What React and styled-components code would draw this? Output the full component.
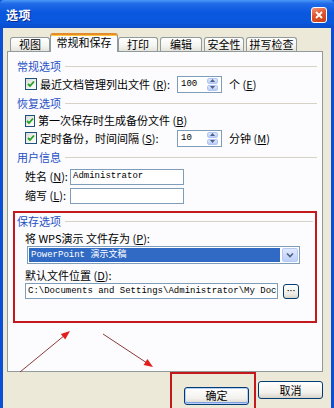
import React from "react";
import styled, { createGlobalStyle, css } from "styled-components";

const cjk = `"Noto Sans CJK SC", "Liberation Sans", sans-serif`;
const mono = `"Liberation Mono", "Noto Sans CJK SC", monospace`;

const GlobalStyle = createGlobalStyle`
  html, body {
    margin: 0;
    padding: 0;
  }
  body {
    width: 334px;
    height: 408px;
    overflow: hidden;
    background: #ece9d8;
    font-family: ${cjk};
  }
`;

const Window = styled.div`
  position: relative;
  width: 334px;
  height: 408px;
  display: flex;
  flex-direction: column;
  background: linear-gradient(90deg, #0a4fd6, #1d66e6 50%, #0a4fd6);
  font-family: ${cjk};
`;

const TitleBar = styled.div`
  height: 28px;
  flex: none;
  display: flex;
  align-items: center;
  justify-content: space-between;
  padding: 0 7px 0 6px;
  border-radius: 4px 4px 0 0;
  background: linear-gradient(
    180deg,
    #4b98f6 0%,
    #1e6ae8 14%,
    #0b58e0 45%,
    #0a57de 80%,
    #0b4cc8 100%
  );
`;

const Title = styled.span`
  color: #fff;
  font-size: 12px;
  font-weight: 700;
  letter-spacing: 0.5px;
  text-shadow: 1px 1px 0 #0a2a8a;
`;

const CloseButton = styled.div`
  width: 16px;
  height: 16px;
  box-sizing: border-box;
  border: 1px solid #fff;
  border-radius: 3px;
  background: linear-gradient(160deg, #f0957a, #e0552c 45%, #c73f18);
  display: flex;
  align-items: center;
  justify-content: center;
  margin-top: 2px;
`;

const Body = styled.div`
  flex: 1;
  display: flex;
  flex-direction: column;
  margin: 0 3px 4px 3px;
  padding: 5px 8px 0 4px;
  background: #ece9d8;
`;

const TabStrip = styled.div`
  display: flex;
  align-items: flex-end;
  height: 18px;
  margin-left: 3px;
  position: relative;
  z-index: 1;
`;

const Tab = styled.div`
  box-sizing: border-box;
  width: ${(p) => p.$w}px;
  height: 14px;
  margin-right: ${(p) => p.$gap}px;
  display: flex;
  align-items: center;
  justify-content: center;
  font-size: 11px;
  line-height: 1;
  color: #000;
  border: 1px solid #919b9c;
  border-bottom: none;
  border-radius: 3px 3px 0 0;
  background: linear-gradient(#ffffff, #f4f4f0 60%, #e4e3da);

  ${(p) =>
    p.$active &&
    css`
      height: 19px;
      margin-bottom: -1px;
      padding-bottom: 2px;
      background: #fcfcfe;
      border-top: 2px solid #e68b2c;
      box-shadow: inset 0 1px 0 #ffc73c;
    `}
`;

const Panel = styled.div`
  box-sizing: border-box;
  width: 316px;
  height: 321px;
  flex: none;
  border: 1px solid #919b9c;
  background: #fcfcfe;
  padding: 6px 5px 0 5px;
  display: flex;
  flex-direction: column;
`;

const Group = styled.div`
  display: flex;
  flex-direction: column;
  padding-left: 4px;
`;

const GroupHead = styled.div`
  display: flex;
  align-items: center;
  gap: 4px;
  height: ${(p) => p.$h}px;
  font-size: 11px;
  line-height: 1;
  color: #1f4fc4;

  &::after {
    content: "";
    flex: 1;
    height: 1px;
    background: #d6d3c6;
  }
`;

const Row = styled.div`
  display: flex;
  align-items: center;
  height: ${(p) => p.$h}px;
  padding-left: 8px;
  font-size: 11px;
  line-height: 1;
  color: #000;
`;

const CheckLabel = styled.label`
  width: 152px;
  display: flex;
  align-items: center;
  white-space: nowrap;
`;

const CheckBox = styled.span`
  box-sizing: border-box;
  width: 12px;
  height: 12px;
  margin-right: 3px;
  border: 1px solid #1c5180;
  background: linear-gradient(135deg, #dcdcd6, #ffffff);
  display: flex;
  align-items: center;
  justify-content: center;
`;

const U = styled.span`
  text-decoration: underline;
`;

const Suffix = styled.span`
  margin-left: 7px;
`;

const SpinBox = styled.div`
  box-sizing: border-box;
  width: 45px;
  height: 17px;
  border: 1px solid #7f9db9;
  background: #fff;
  display: flex;
  align-items: center;
  justify-content: space-between;
  padding: 1px 3px 1px 3px;
  font-family: ${mono};
  font-size: 9px;
`;

const SpinButtons = styled.div`
  width: 11px;
  height: 13px;
  display: flex;
  flex-direction: column;
  gap: 1px;
`;

const SpinArrow = styled.div`
  flex: 1;
  border-radius: 2px;
  background: linear-gradient(#dce7fd, #b9cdf6);
  border: 1px solid #b1c6f2;
  box-sizing: border-box;
  display: flex;
  align-items: center;
  justify-content: center;
`;

const FieldLabel = styled.span`
  width: 45px;
  white-space: nowrap;
`;

const TextInput = styled.div`
  box-sizing: border-box;
  width: ${(p) => p.$w}px;
  height: 16px;
  border: 1px solid #7f9db9;
  background: #fff;
  padding-left: 2px;
  display: flex;
  align-items: center;
  font-family: ${mono};
  font-size: 9px;
  white-space: nowrap;
  overflow: hidden;
`;

const SaveGroup = styled.div`
  margin-top: 6px;
  border: 2px solid #c4181c;
  padding: 0 2px 22px 2px;
  display: flex;
  flex-direction: column;
`;

const SaveBody = styled.div`
  display: flex;
  flex-direction: column;
  padding: 0 14px 0 8px;
  font-size: 11px;
  line-height: 1;
`;

const Caption = styled.div`
  height: ${(p) => p.$h}px;
  margin-top: ${(p) => p.$top || 0}px;
  display: flex;
  align-items: center;
  white-space: nowrap;
`;

const Select = styled.div`
  box-sizing: border-box;
  height: 18px;
  margin: 0 -1px 0 2px;
  border: 1px solid #7f9db9;
  background: #fff;
  padding: 1px;
  display: flex;
  gap: 2px;
`;

const SelectValue = styled.div`
  flex: 1;
  background: #316ac5;
  color: #fff;
  font-family: ${mono};
  font-size: 9px;
  padding-left: 2px;
  display: flex;
  align-items: center;
  white-space: nowrap;
`;

const DropButton = styled.div`
  box-sizing: border-box;
  width: 16px;
  border: 1px solid #b5c9f5;
  border-radius: 2px;
  background: linear-gradient(#e0e9fd, #bcd0f8);
  display: flex;
  align-items: center;
  justify-content: center;
`;

const PathRow = styled.div`
  display: flex;
  align-items: center;
  gap: 5px;
  height: 16px;
`;

const BrowseButton = styled.div`
  box-sizing: border-box;
  width: 16px;
  height: 15px;
  border: 1px solid #003c74;
  border-radius: 3px;
  background: linear-gradient(#ffffff, #ecebe4 70%, #d8d4c8);
  display: flex;
  align-items: center;
  justify-content: center;
  font-family: ${mono};
  font-size: 8px;
  font-weight: 700;
  line-height: 1;
  letter-spacing: -2px;
  padding-right: 2px;
`;

const Footer = styled.div`
  flex: 1;
  display: flex;
  justify-content: flex-end;
  align-items: flex-start;
`;

const Highlight = styled.div`
  border: 2px solid #c4181c;
  padding: 7px 5px 6px 12px;
`;

const Button = styled.button`
  box-sizing: border-box;
  width: 65px;
  height: 18px;
  padding: 0;
  border: 1px solid #003c74;
  border-radius: 3px;
  background: linear-gradient(#ffffff, #f2f1ec 65%, #d9d4c9);
  font-family: ${cjk};
  font-size: 11px;
  line-height: 1;
  color: #000;
  margin-top: ${(p) => p.$top || 0}px;
  margin-left: ${(p) => p.$left || 0}px;

  ${(p) =>
    p.$default &&
    css`
      box-shadow: inset 0 0 0 1px #b8d0f8, inset 0 -1px 0 1px #7fa0e0;
    `}
`;

const Annotation = styled.svg`
  position: absolute;
  left: 0;
  top: 0;
  pointer-events: none;
`;

const tabs = [
  { label: "视图", w: 40, gap: 0 },
  { label: "常规和保存", w: 68, gap: 0, active: true },
  { label: "打印", w: 40, gap: 2 },
  { label: "编辑", w: 42, gap: 2 },
  { label: "安全性", w: 40, gap: 2 },
  { label: "拼写检查", w: 51, gap: 0 },
];

function Check() {
  return (
    <CheckBox>
      <svg width="8" height="8" viewBox="0 0 8 8">
        <path d="M1 4 L3 6 L7 1.5" fill="none" stroke="#21a121" strokeWidth="1.8" />
      </svg>
    </CheckBox>
  );
}

function Spin({ value }) {
  return (
    <SpinBox>
      <span>{value}</span>
      <SpinButtons>
        <SpinArrow>
          <svg width="5" height="3" viewBox="0 0 5 3">
            <path d="M0 3 L2.5 0 L5 3 Z" fill="#4d6185" />
          </svg>
        </SpinArrow>
        <SpinArrow>
          <svg width="5" height="3" viewBox="0 0 5 3">
            <path d="M0 0 L2.5 3 L5 0 Z" fill="#4d6185" />
          </svg>
        </SpinArrow>
      </SpinButtons>
    </SpinBox>
  );
}

export default function App() {
  return (
    <>
      <GlobalStyle />
      <Window>
        <TitleBar>
          <Title>选项</Title>
          <CloseButton>
            <svg width="8" height="8" viewBox="0 0 8 8">
              <path d="M1 1 L7 7 M7 1 L1 7" stroke="#fff" strokeWidth="1.8" />
            </svg>
          </CloseButton>
        </TitleBar>

        <Body>
          <TabStrip>
            {tabs.map((t) => (
              <Tab key={t.label} $w={t.w} $gap={t.gap} $active={t.active}>
                {t.label}
              </Tab>
            ))}
          </TabStrip>

          <Panel>
            <Group>
              <GroupHead $h={16}>常规选项</GroupHead>
              <Row $h={20}>
                <CheckLabel>
                  <Check />
                  最近文档管理列出文件 (<U>R</U>):
                </CheckLabel>
                <Spin value="100" />
                <Suffix>
                  个 (<U>E</U>)
                </Suffix>
              </Row>

              <GroupHead $h={18}>恢复选项</GroupHead>
              <Row $h={17}>
                <CheckLabel>
                  <Check />
                  第一次保存时生成备份文件 (<U>B</U>)
                </CheckLabel>
              </Row>
              <Row $h={18}>
                <CheckLabel>
                  <Check />
                  定时备份，时间间隔 (<U>S</U>):
                </CheckLabel>
                <Spin value="10" />
                <Suffix>
                  分钟 (<U>M</U>)
                </Suffix>
              </Row>

              <GroupHead $h={20}>用户信息</GroupHead>
              <Row $h={19}>
                <FieldLabel>
                  姓名 (<U>N</U>):
                </FieldLabel>
                <TextInput $w={114}>Administrator</TextInput>
              </Row>
              <Row $h={19}>
                <FieldLabel>
                  缩写 (<U>L</U>):
                </FieldLabel>
                <TextInput $w={114} />
              </Row>
            </Group>

            <SaveGroup>
              <GroupHead $h={17}>保存选项</GroupHead>
              <SaveBody>
                <Caption $h={16}>
                  将 WPS演示 文件存为 (<U>P</U>):
                </Caption>
                <Select>
                  <SelectValue>PowerPoint 演示文稿</SelectValue>
                  <DropButton>
                    <svg width="8" height="6" viewBox="0 0 8 6">
                      <path d="M1 1.5 L4 4.5 L7 1.5" fill="none" stroke="#4d6185" strokeWidth="1.6" />
                    </svg>
                  </DropButton>
                </Select>
                <Caption $h={15} $top={4}>
                  默认文件位置 (<U>D</U>):
                </Caption>
                <PathRow>
                  <TextInput $w={253}>
                    C:\Documents and Settings\Administrator\My Doc
                  </TextInput>
                  <BrowseButton>···</BrowseButton>
                </PathRow>
              </SaveBody>
            </SaveGroup>
          </Panel>

          <Footer>
            <Highlight>
              <Button $default>确定</Button>
            </Highlight>
            <Button $top={9} $left={2}>
              取消
            </Button>
          </Footer>
        </Body>

        <Annotation width="334" height="408" viewBox="0 0 334 408">
          <line x1="20" y1="372" x2="65" y2="335" stroke="#8a3b3b" strokeWidth="1" />
          <polygon points="70,331 65.2,339.4 60.8,334" fill="#e0201c" />
          <line x1="103" y1="334" x2="147" y2="363" stroke="#8a3b3b" strokeWidth="1" />
          <polygon points="153,367 143.6,364.9 147.4,359.1" fill="#e0201c" />
        </Annotation>
      </Window>
    </>
  );
}
